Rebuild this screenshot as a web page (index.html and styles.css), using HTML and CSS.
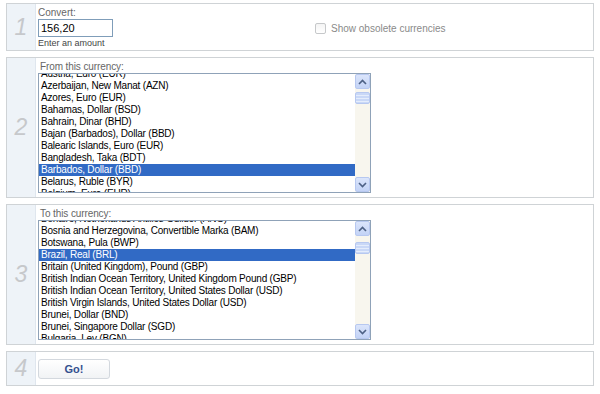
FILE: index.html
```html
<!DOCTYPE html>
<html lang="en">
<head>
    <meta charset="UTF-8">
    <title>Currency Converter</title>
    <link rel="stylesheet" href="styles.css">
</head>
<body>
    <div class="steps">
        <!-- step 1: amount -->
        <div class="step step-amount">
            <div class="num">1</div>
            <div class="content row">
                <div class="amount">
                    <div class="label">Convert:</div>
                    <input type="text" class="amount-input" value="156,20">
                    <div class="hint">Enter an amount</div>
                </div>
                <label class="obsolete">
                    <span class="check"></span>
                    Show obsolete currencies
                </label>
            </div>
        </div>

        <!-- step 2: from -->
        <div class="step">
            <div class="num">2</div>
            <div class="content">
                <div class="label list-label">From this currency:</div>
                <div class="listbox">
                    <ul class="items from-items">
                        <li>Austria, Euro (EUR)</li>
                        <li>Azerbaijan, New Manat (AZN)</li>
                        <li>Azores, Euro (EUR)</li>
                        <li>Bahamas, Dollar (BSD)</li>
                        <li>Bahrain, Dinar (BHD)</li>
                        <li>Bajan (Barbados), Dollar (BBD)</li>
                        <li>Balearic Islands, Euro (EUR)</li>
                        <li>Bangladesh, Taka (BDT)</li>
                        <li class="selected">Barbados, Dollar (BBD)</li>
                        <li>Belarus, Ruble (BYR)</li>
                        <li>Belgium, Euro (EUR)</li>
                    </ul>
                    <div class="scrollbar">
                        <div class="arrow"><svg width="9" height="6" viewBox="0 0 9 6"><path d="M1 5 L4.5 1.5 L8 5" fill="none" stroke="#4d6185" stroke-width="1.6"/></svg></div>
                        <div class="thumb"></div>
                        <div class="track"></div>
                        <div class="arrow"><svg width="9" height="6" viewBox="0 0 9 6"><path d="M1 1 L4.5 4.5 L8 1" fill="none" stroke="#4d6185" stroke-width="1.6"/></svg></div>
                    </div>
                </div>
            </div>
        </div>

        <!-- step 3: to -->
        <div class="step">
            <div class="num">3</div>
            <div class="content">
                <div class="label list-label">To this currency:</div>
                <div class="listbox">
                    <ul class="items to-items">
                        <li>Bonaire, Netherlands Antilles Guilder (ANG)</li>
                        <li>Bosnia and Herzegovina, Convertible Marka (BAM)</li>
                        <li>Botswana, Pula (BWP)</li>
                        <li class="selected">Brazil, Real (BRL)</li>
                        <li>Britain (United Kingdom), Pound (GBP)</li>
                        <li>British Indian Ocean Territory, United Kingdom Pound (GBP)</li>
                        <li>British Indian Ocean Territory, United States Dollar (USD)</li>
                        <li>British Virgin Islands, United States Dollar (USD)</li>
                        <li>Brunei, Dollar (BND)</li>
                        <li>Brunei, Singapore Dollar (SGD)</li>
                        <li>Bulgaria, Lev (BGN)</li>
                    </ul>
                    <div class="scrollbar">
                        <div class="arrow"><svg width="9" height="6" viewBox="0 0 9 6"><path d="M1 5 L4.5 1.5 L8 5" fill="none" stroke="#4d6185" stroke-width="1.6"/></svg></div>
                        <div class="thumb thumb-low"></div>
                        <div class="track"></div>
                        <div class="arrow"><svg width="9" height="6" viewBox="0 0 9 6"><path d="M1 1 L4.5 4.5 L8 1" fill="none" stroke="#4d6185" stroke-width="1.6"/></svg></div>
                    </div>
                </div>
            </div>
        </div>

        <!-- step 4: go -->
        <div class="step step-go">
            <div class="num">4</div>
            <div class="content">
                <button type="button" class="go-button">Go!</button>
            </div>
        </div>
    </div>
</body>
</html>
```

FILE: styles.css
```css
body {
    margin: 0;
    background-color: #ffffff;
    font-family: "Liberation Sans", Arial, sans-serif;
    color: #000;
}
.steps {
    padding-top: 3px;
}
.step {
    display: flex;
    width: 588px;
    box-sizing: border-box;
    margin: 0 6px 6px 6px;
    border: 1px solid #cfd3d6;
    background-color: #fff;
}
.num {
    width: 28px;
    flex-shrink: 0;
    background-color: #eef3f8;
    border-right: 1px solid #dfe6ee;
    display: flex;
    align-items: center;
    justify-content: center;
    font-size: 23px;
    font-style: italic;
    color: #c6c8cb;
}
.content {
    padding: 3px 0 4px 2px;
}
.row {
    display: flex;
    padding-bottom: 1px;
}
.label {
    font-size: 10px;
    line-height: 12px;
    color: #666;
}
.amount {
    width: 277px;
}
.amount-input {
    display: block;
    width: 75px;
    height: 18px;
    box-sizing: border-box;
    margin: 0;
    padding: 1px 2px;
    border: 1px solid #7f9db9;
    font-family: "Liberation Sans", Arial, sans-serif;
    font-size: 11px;
    color: #000;
}
.hint {
    font-size: 9px;
    line-height: 12px;
    color: #444;
}
.obsolete {
    display: flex;
    align-items: center;
    gap: 5px;
    font-size: 10px;
    color: #8a8a8a;
}
.check {
    width: 9px;
    height: 9px;
    border: 1px solid #c6c8ca;
    border-radius: 2px;
    background: linear-gradient(#f4f4f4, #ffffff);
}
.list-label {
    padding-left: 2px;
    letter-spacing: -0.1px;
}
.listbox {
    display: flex;
    width: 333px;
    height: 120px;
    box-sizing: border-box;
    border: 1px solid #8fa2b8;
    overflow: hidden;
}
.items {
    flex: 1;
    margin: 0;
    padding: 0;
    list-style: none;
    overflow: hidden;
    font-size: 10px;
    line-height: 12px;
    letter-spacing: -0.2px;
}
.items li {
    height: 12px;
    padding-left: 2px;
    white-space: nowrap;
}
.from-items li:first-child {
    margin-top: -6px;
}
.to-items li:first-child {
    margin-top: -8px;
}
.items li.selected {
    background-color: #316ac5;
    color: #fff;
}
.scrollbar {
    width: 15px;
    flex-shrink: 0;
    display: flex;
    flex-direction: column;
    background-color: #f8f6ee;
}
.arrow {
    height: 15px;
    box-sizing: border-box;
    border: 1px solid #b7c8f0;
    border-radius: 2px;
    background: linear-gradient(#dbe5fb, #c3d3f6);
    display: flex;
    align-items: center;
    justify-content: center;
}
.thumb {
    height: 12px;
    margin-top: 3px;
    box-sizing: border-box;
    border: 1px solid #b7c8f0;
    border-radius: 2px;
    background: repeating-linear-gradient(#c9d8f7 0 2px, #e5edfc 2px 3px);
}
.thumb-low {
    margin-top: 6px;
}
.track {
    flex: 1;
}
.step-go .content {
    padding: 7px 0 6px 2px;
}
.go-button {
    width: 72px;
    height: 20px;
    margin: 0;
    padding: 0;
    border: 1px solid #d3d8de;
    border-radius: 3px;
    background: linear-gradient(#ffffff, #f1f3f5);
    font-family: "Liberation Sans", Arial, sans-serif;
    font-size: 11px;
    font-weight: bold;
    color: #34508f;
}
```
